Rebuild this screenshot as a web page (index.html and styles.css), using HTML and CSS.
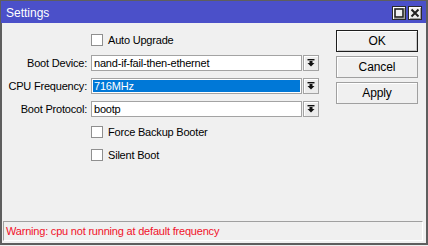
FILE: index.html
```html
<!DOCTYPE html>
<html>
<head>
<meta charset="utf-8">
<link rel="stylesheet" href="styles.css">
</head>
<body>
<div class="window">
  <div class="titlebar">
    <span class="title">Settings</span>
    <div class="tbtns">
      <span class="tbtn"><svg width="10" height="10" viewBox="0 0 10 10"><rect x="1" y="1" width="8" height="8" fill="none" stroke="#222" stroke-width="1.6"/></svg></span>
      <span class="tbtn"><svg width="10" height="10" viewBox="0 0 10 10"><path d="M1.5 1.5 L8.5 8.5 M8.5 1.5 L1.5 8.5" stroke="#222" stroke-width="2"/></svg></span>
    </div>
  </div>
  <div class="main">
    <div class="form">
      <span></span>
      <label class="check"><span class="box"></span>Auto Upgrade</label>

      <span class="lbl">Boot Device:</span>
      <div class="field"><div class="input">nand-if-fail-then-ethernet</div><span class="drop"><svg width="8" height="8" viewBox="0 0 8 8"><rect x="0.5" y="0" width="7" height="1.4" fill="#111"/><rect x="2.5" y="2" width="3" height="2" fill="#111"/><polygon points="0.5,4 7.5,4 4,7.6" fill="#111"/></svg></span></div>

      <span class="lbl">CPU Frequency:</span>
      <div class="field"><div class="input"><span class="sel">716MHz</span></div><span class="drop"><svg width="8" height="8" viewBox="0 0 8 8"><rect x="0.5" y="0" width="7" height="1.4" fill="#111"/><rect x="2.5" y="2" width="3" height="2" fill="#111"/><polygon points="0.5,4 7.5,4 4,7.6" fill="#111"/></svg></span></div>

      <span class="lbl">Boot Protocol:</span>
      <div class="field"><div class="input">bootp</div><span class="drop"><svg width="8" height="8" viewBox="0 0 8 8"><rect x="0.5" y="0" width="7" height="1.4" fill="#111"/><rect x="2.5" y="2" width="3" height="2" fill="#111"/><polygon points="0.5,4 7.5,4 4,7.6" fill="#111"/></svg></span></div>

      <span></span>
      <label class="check"><span class="box"></span>Force Backup Booter</label>

      <span></span>
      <label class="check"><span class="box"></span>Silent Boot</label>
    </div>
    <div class="buttons">
      <button class="btn default">OK</button>
      <button class="btn">Cancel</button>
      <button class="btn">Apply</button>
    </div>
  </div>
  <div class="status">Warning: cpu not running at default frequency</div>
</div>
</body>
</html>
```
FILE: styles.css
```css
html, body {
  margin: 0;
  padding: 0;
  background: #f0f0f0;
}
body {
  width: 428px;
  height: 246px;
  font-family: "Liberation Sans", Arial, sans-serif;
  font-size: 11px;
  letter-spacing: -0.2px;
  color: #000;
}
.window {
  box-sizing: border-box;
  width: 428px;
  height: 245px;
  border: 2px solid #5e5e5e;
  border-top-width: 1px;
  background: #f0f0f0;
  display: flex;
  flex-direction: column;
}
.titlebar {
  height: 22px;
  background: #4b50c9;
  display: flex;
  align-items: center;
  padding: 0 4px 0 5px;
  margin: 0 0 0 -1px;
}
.title {
  color: #fff;
  font-size: 12px;
  letter-spacing: 0;
  flex: 1;
  padding-top: 2px;
}
.tbtns {
  display: flex;
  gap: 2px;
  padding-top: 2px;
}
.tbtn {
  box-sizing: border-box;
  width: 14px;
  height: 14px;
  border: 1px solid #2a2a2a;
  background: #f0f0f0;
  box-shadow: inset 1px 1px 0 #fff, inset -1px -1px 0 #a0a0a0;
  display: flex;
  align-items: center;
  justify-content: center;
}
.main {
  display: flex;
  padding: 5px 8px 0 0;
}
.form {
  display: grid;
  grid-template-columns: 85px auto;
  grid-auto-rows: 23px;
  column-gap: 4px;
  align-items: center;
}
.lbl {
  text-align: right;
  white-space: nowrap;
}
.check {
  display: flex;
  align-items: center;
  gap: 5px;
}
.box {
  box-sizing: border-box;
  width: 12px;
  height: 12px;
  background: #fff;
  border: 1px solid #8f8f8f;
}
.field {
  display: flex;
  gap: 1px;
  align-items: center;
}
.input {
  box-sizing: border-box;
  width: 211px;
  height: 16px;
  border: 1px solid #a3a3a3;
  background: #fff;
  padding: 1px;
  line-height: 12px;
  display: flex;
  align-items: center;
  white-space: nowrap;
}
.input:not(:has(.sel)) {
  padding-left: 2px;
}
.sel {
  flex: 1;
  align-self: stretch;
  background: #0078d7;
  color: #fff;
  padding-left: 1px;
  line-height: 12px;
}
.drop {
  box-sizing: border-box;
  width: 16px;
  height: 16px;
  border: 1px solid #a3a3a3;
  background: #ececec;
  box-shadow: inset 1px 1px 0 #fff;
  display: flex;
  align-items: center;
  justify-content: center;
}
.buttons {
  margin-left: auto;
  padding-top: 2px;
  display: flex;
  flex-direction: column;
  gap: 4px;
}
.btn {
  box-sizing: border-box;
  width: 82px;
  height: 22px;
  font-family: "Liberation Sans", Arial, sans-serif;
  font-size: 12px;
  letter-spacing: -0.1px;
  color: #000;
  background: #f0f0f0;
  border: 1px solid #a0a0a0;
  box-shadow: inset 1px 1px 0 #fff;
  padding: 0;
}
.btn.default {
  border-color: #1e1e1e;
  box-shadow: inset 1px 1px 0 #fff, inset -1px -1px 0 #c8c8c8;
}
.status {
  margin: auto 3px 2px 1px;
  height: 20px;
  box-sizing: border-box;
  border-top: 1px solid #a0a0a0;
  border-left: 1px solid #a0a0a0;
  border-right: 1px solid #fff;
  border-bottom: 1px solid #fff;
  color: #f0102a;
  font-size: 11px;
  padding-left: 2px;
  line-height: 19px;
}
```
